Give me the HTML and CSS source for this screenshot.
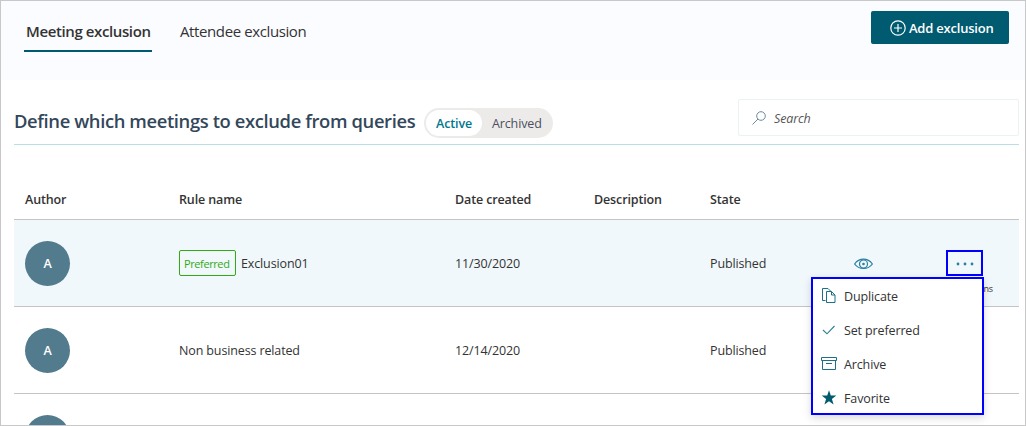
FILE: index.html
```html
<!DOCTYPE html>
<html lang="en">
<head>
<meta charset="utf-8">
<title>Meeting exclusions</title>
<link rel="stylesheet" href="styles.css">
</head>
<body>
<div class="page">
  <header class="topbar">
    <nav class="tabs">
      <a class="tab tab-active">Meeting exclusion</a>
      <a class="tab">Attendee exclusion</a>
    </nav>
    <button class="add">
      <svg width="16" height="16" viewBox="0 0 16 16" fill="none" stroke="#fff" stroke-width="1.2"><circle cx="8" cy="8" r="7.2"/><path d="M8 4v8M4 8h8"/></svg>
      <span>Add exclusion</span>
    </button>
  </header>
  <main class="content">
    <section class="title-row">
      <h1 class="title">Define which meetings to exclude from queries</h1>
      <div class="toggle"><span class="toggle-item toggle-on">Active</span><span class="toggle-item">Archived</span></div>
      <div class="search">
        <svg width="14" height="14" viewBox="0 0 14 14" fill="none" stroke="#6c8ba0" stroke-width="1"><circle cx="9" cy="5" r="4.3"/><path d="M6 8L.5 13.5"/></svg>
        <span>Search</span>
      </div>
    </section>
    <section class="table">
      <div class="row head">
        <span>Author</span><span>Rule name</span><span>Date created</span><span>Description</span><span>State</span>
      </div>
      <div class="row body selected">
        <div class="avatar">A</div>
        <div class="rule"><span class="badge">Preferred</span><span>Exclusion01</span></div>
        <span>11/30/2020</span>
        <span></span>
        <span>Published</span>
        <svg class="eye" width="19" height="12" viewBox="0 0 19 12" fill="none" stroke="#2b7f9f" stroke-width="1.2"><path d="M.6 6C3 2.7 6 1.2 9.5 1.2S16 2.7 18.4 6C16 9.300 13 10.500 9.500 10.500S3 9.300 .6 6z"/><circle cx="9.500" cy="6" r="4"/><circle cx="9.500" cy="6" r="1.300" fill="#2b7f9f" stroke="none"/></svg>
        <div class="more">
          <svg width="18" height="4" viewBox="0 0 18 4" fill="#2b7f9f"><circle cx="2" cy="2" r="1.400"/><circle cx="9" cy="2" r="1.400"/><circle cx="16" cy="2" r="1.400"/></svg>
          <span class="tip">ns</span>
          <div class="menu">
            <div class="item"><svg width="16" height="16" viewBox="0 0 16 16" fill="none" stroke="#1d7085" stroke-width="1"><path d="M4.500 12.500h-3V.5H7l3 3"/><path d="M5.500 3.500h5l3.500 3.500v7.500H5.500zM10.500 3.500V7H14"/></svg><span>Duplicate</span></div>
            <div class="item"><svg width="16" height="16" viewBox="0 0 16 16" fill="none" stroke="#2b7f8f" stroke-width="1.100"><path d="M2 8l4 3.800L13.500 4"/></svg><span>Set preferred</span></div>
            <div class="item"><svg width="16" height="16" viewBox="0 0 16 16" fill="none" stroke="#1d7085" stroke-width="1"><path d="M.5 1.500h15v3H.5zM1.500 4.500v9h13v-9M5 7.500h6"/></svg><span>Archive</span></div>
            <div class="item"><svg width="16" height="16" viewBox="0 0 16 16" fill="#005a70"><path d="M8 .3l1.800 5.300h5.500l-4.400 3.400 1.700 5.500L8 11.200l-4.600 3.300L5.100 9 .7 5.600h5.500z"/></svg><span>Favorite</span></div>
          </div>
        </div>
      </div>
      <div class="row body">
        <div class="avatar">A</div>
        <span>Non business related</span>
        <span>12/14/2020</span>
        <span></span>
        <span>Published</span>
      </div>
      <div class="row body"><div class="avatar"></div></div>
    </section>
  </main>
</div>
</body>
</html>
```
FILE: styles.css
```css
* { box-sizing: border-box; }
body { margin: 0; font-family: "Open Sans", "Noto Sans", sans-serif; font-size: 12.5px; letter-spacing: -.13px; color: #333; }
svg { display: block; flex: none; }
span { white-space: nowrap; }
.page { width: 1026px; height: 426px; border: 1px solid #c8c8c8; overflow: hidden; background: #fff; }
.topbar { height: 79px; background: #fbfcff; display: flex; justify-content: space-between; align-items: flex-start; padding: 10px 16px 0 23px; }
.tabs { display: flex; gap: 26px; }
.tab { height: 41px; padding: 9px 2px 0; font-size: 15px; line-height: 22px; letter-spacing: -.39px; white-space: nowrap; }
.tab-active { font-weight: 600; border-bottom: 2px solid #005a70; width: 128px; }
.add { width: 138px; height: 33px; border: 0; border-radius: 2px; background: #005a70; color: #fff; font: 600 13px "Open Sans", sans-serif; letter-spacing: -.22px; display: flex; align-items: center; gap: 3px; padding: 0 0 0 19px; }
.content { padding: 0 6px 0 13px; }
.title-row { height: 65px; display: flex; align-items: flex-start; border-bottom: 1px solid #b9dfe6; padding-top: 19px; }
.title { margin: 9px 0 0; font-size: 18.4px; line-height: 26px; font-weight: 600; color: #33475b; width: 410px; white-space: nowrap; letter-spacing: -.38px; }
.toggle { margin-top: 9px; height: 30px; width: 129px; border-radius: 15px; background: #edebe9; padding: 2px; display: flex; color: #4b4f60; }
.toggle-item { height: 26px; line-height: 27px; padding: 0 10px; border-radius: 13px; }
.toggle-on { width: 56px; background: #fff; color: #00788f; font-weight: 600; }
.search { margin-left: auto; width: 281px; height: 37px; border: 1px solid #eaf3f4; border-radius: 2px; display: flex; align-items: center; gap: 8px; padding-left: 13px; font-style: italic; color: #555; }
.search span { padding-top: 1px; }
.row { display: grid; grid-template-columns: 154px 276px 139px 116px 144px 92px 37px; align-items: center; padding-left: 11px; border-bottom: 1px solid #c4c4c4; }
.head { height: 75px; padding-top: 34px; font-weight: 600; }
.body { height: 87px; }
.selected { background: #f0f8fb; }
.avatar { width: 45px; height: 45px; border-radius: 50%; background: #527b8d; color: #fff; font-weight: 600; display: flex; align-items: center; justify-content: center; }
.rule { display: flex; align-items: center; gap: 5px; }
.rule > :last-child { padding-top: 1px; }
.badge { height: 26px; width: 57px; border: 1px solid #32aa14; border-radius: 2px; color: #32aa14; font-size: 11px; line-height: 26px; padding-left: 4px; letter-spacing: -.4px; }
.eye { margin-top: 2px; }
.more { position: relative; height: 26px; border: 2px solid #00f; display: flex; align-items: center; justify-content: center; margin-top: -1px; padding-top: 2px; }
.tip { position: absolute; right: -12px; top: 31px; font-size: 9px; line-height: 12px; }
.menu { position: absolute; right: -3px; top: 25px; width: 173px; height: 138px; background: #fff; border: 2px solid #00f; box-shadow: 0 3px 8px rgba(0,0,0,.15); z-index: 2; }
.item { height: 34px; display: flex; align-items: center; gap: 7px; padding-left: 8px; }
.item span { padding-top: 1px; }
```
